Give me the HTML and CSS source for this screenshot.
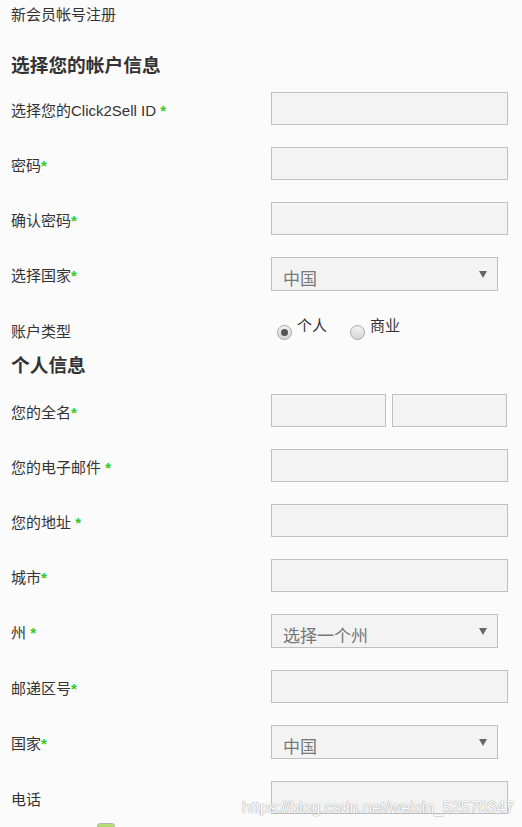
FILE: index.html
```html
<!DOCTYPE html>
<html lang="zh-CN">
<head>
<meta charset="utf-8">
<title>新会员帐号注册</title>
<link rel="stylesheet" href="styles.css">
</head>
<body>
<div class="form">
  <div class="title">新会员帐号注册</div>
  <h3 class="section first">选择您的帐户信息</h3>

  <div class="row"><div class="label">选择您的Click2Sell ID <span class="req">*</span></div><input class="field" type="text"></div>
  <div class="row"><div class="label">密码<span class="req">*</span></div><input class="field" type="password"></div>
  <div class="row"><div class="label">确认密码<span class="req">*</span></div><input class="field" type="password"></div>
  <div class="row sel-row"><div class="label">选择国家<span class="req">*</span></div>
    <div class="select"><span>中国</span><svg class="arrow" width="8" height="7" viewBox="0 0 8 7"><path d="M0 0H8L4 7Z" fill="#666"/></svg></div></div>
  <div class="row radio-row"><div class="label">账户类型</div>
    <div class="radios">
      <label class="opt"><span class="dot on"></span><span class="opt-text">个人</span></label>
      <label class="opt"><span class="dot"></span><span class="opt-text">商业</span></label>
    </div>
  </div>

  <h3 class="section second">个人信息</h3>
  <div class="row"><div class="label">您的全名<span class="req">*</span></div>
    <div class="pair"><input class="field half" type="text"><input class="field half" type="text"></div></div>
  <div class="row"><div class="label">您的电子邮件 <span class="req">*</span></div><input class="field" type="text"></div>
  <div class="row"><div class="label">您的地址 <span class="req">*</span></div><input class="field" type="text"></div>
  <div class="row"><div class="label">城市<span class="req">*</span></div><input class="field" type="text"></div>
  <div class="row sel-row"><div class="label">州 <span class="req">*</span></div>
    <div class="select"><span>选择一个州</span><svg class="arrow" width="8" height="7" viewBox="0 0 8 7"><path d="M0 0H8L4 7Z" fill="#666"/></svg></div></div>
  <div class="row"><div class="label">邮递区号<span class="req">*</span></div><input class="field" type="text"></div>
  <div class="row sel-row"><div class="label">国家<span class="req">*</span></div>
    <div class="select"><span>中国</span><svg class="arrow" width="8" height="7" viewBox="0 0 8 7"><path d="M0 0H8L4 7Z" fill="#666"/></svg></div></div>
  <div class="row last"><div class="label">电话</div><input class="field" type="text"></div>
  <div class="checkbox"></div>
</div>
<div class="watermark">https://blog.csdn.net/weixin_52570347</div>
</body>
</html>
```

FILE: styles.css
```css
html, body {
  margin: 0;
  padding: 0;
  background: #fbfbfb;
}
body {
  font-family: "Liberation Sans", "Noto Sans CJK SC", sans-serif;
  color: #333;
  font-size: 15px;
  overflow: hidden;
  height: 827px;
  position: relative;
}
.form {
  padding-left: 11px;
}
.title {
  padding-top: 5px;
  line-height: 20px;
  font-size: 15px;
}
.section {
  font-size: 18.72px;
  font-weight: bold;
  line-height: 24px;
  color: #333;
  margin: 0;
}
.section.first {
  margin: 29px 0 14px;
}
.section.second {
  margin: 8px 0 16px;
}
.row {
  display: flex;
  align-items: center;
  height: 33px;
  margin-bottom: 22px;
}
.row.sel-row {
  height: 34px;
}
.row.radio-row {
  margin-bottom: 0;
}
.row.last {
  margin-bottom: 9px;
}
.label {
  width: 260px;
  flex: none;
  padding-top: 4px;
  line-height: 20px;
  white-space: nowrap;
}
.req {
  color: #33cc22;
  font-weight: bold;
}
.field {
  box-sizing: border-box;
  width: 237px;
  height: 33px;
  margin: 0;
  padding: 0 8px;
  border: 1px solid #c0c0c0;
  background: #f3f3f3;
  outline: none;
  font: inherit;
}
.pair {
  display: flex;
  gap: 6px;
}
.field.half {
  width: 115px;
}
.select {
  box-sizing: border-box;
  width: 227px;
  height: 34px;
  border: 1px solid #c0c0c0;
  background: #f3f3f3;
  display: flex;
  align-items: center;
  justify-content: space-between;
  padding: 6px 10px 0 11px;
  font-size: 17px;
  color: #777;
}
.select .arrow {
  margin-top: -5px;
}
.radios {
  display: flex;
  align-items: center;
  margin-left: 6px;
  margin-top: 5px;
}
.opt {
  display: flex;
  align-items: center;
  margin-right: 23px;
}
.dot {
  box-sizing: border-box;
  width: 15px;
  height: 15px;
  border-radius: 50%;
  border: 1px solid #a8a8a8;
  background: linear-gradient(#f2f2f2, #d6d6d6);
  display: flex;
  align-items: center;
  justify-content: center;
}
.dot.on::after {
  content: "";
  width: 7px;
  height: 7px;
  border-radius: 50%;
  background: #555;
}
.opt-text {
  margin-left: 5px;
  font-size: 15px;
  line-height: 20px;
  padding-bottom: 12px;
}
.checkbox {
  margin-left: 86px;
  width: 18px;
  height: 14px;
  box-sizing: border-box;
  border: 1px solid #b5b5b5;
  border-radius: 3px;
  background: linear-gradient(#b8e07a, #8cc43c);
}
.watermark {
  position: absolute;
  left: 242px;
  top: 797px;
  font-family: "Liberation Sans", sans-serif;
  font-size: 16px;
  line-height: 22px;
  color: #ffffff;
  text-shadow: 0 0 1px #999, 0 0 1px #999;
  white-space: nowrap;
}
```
